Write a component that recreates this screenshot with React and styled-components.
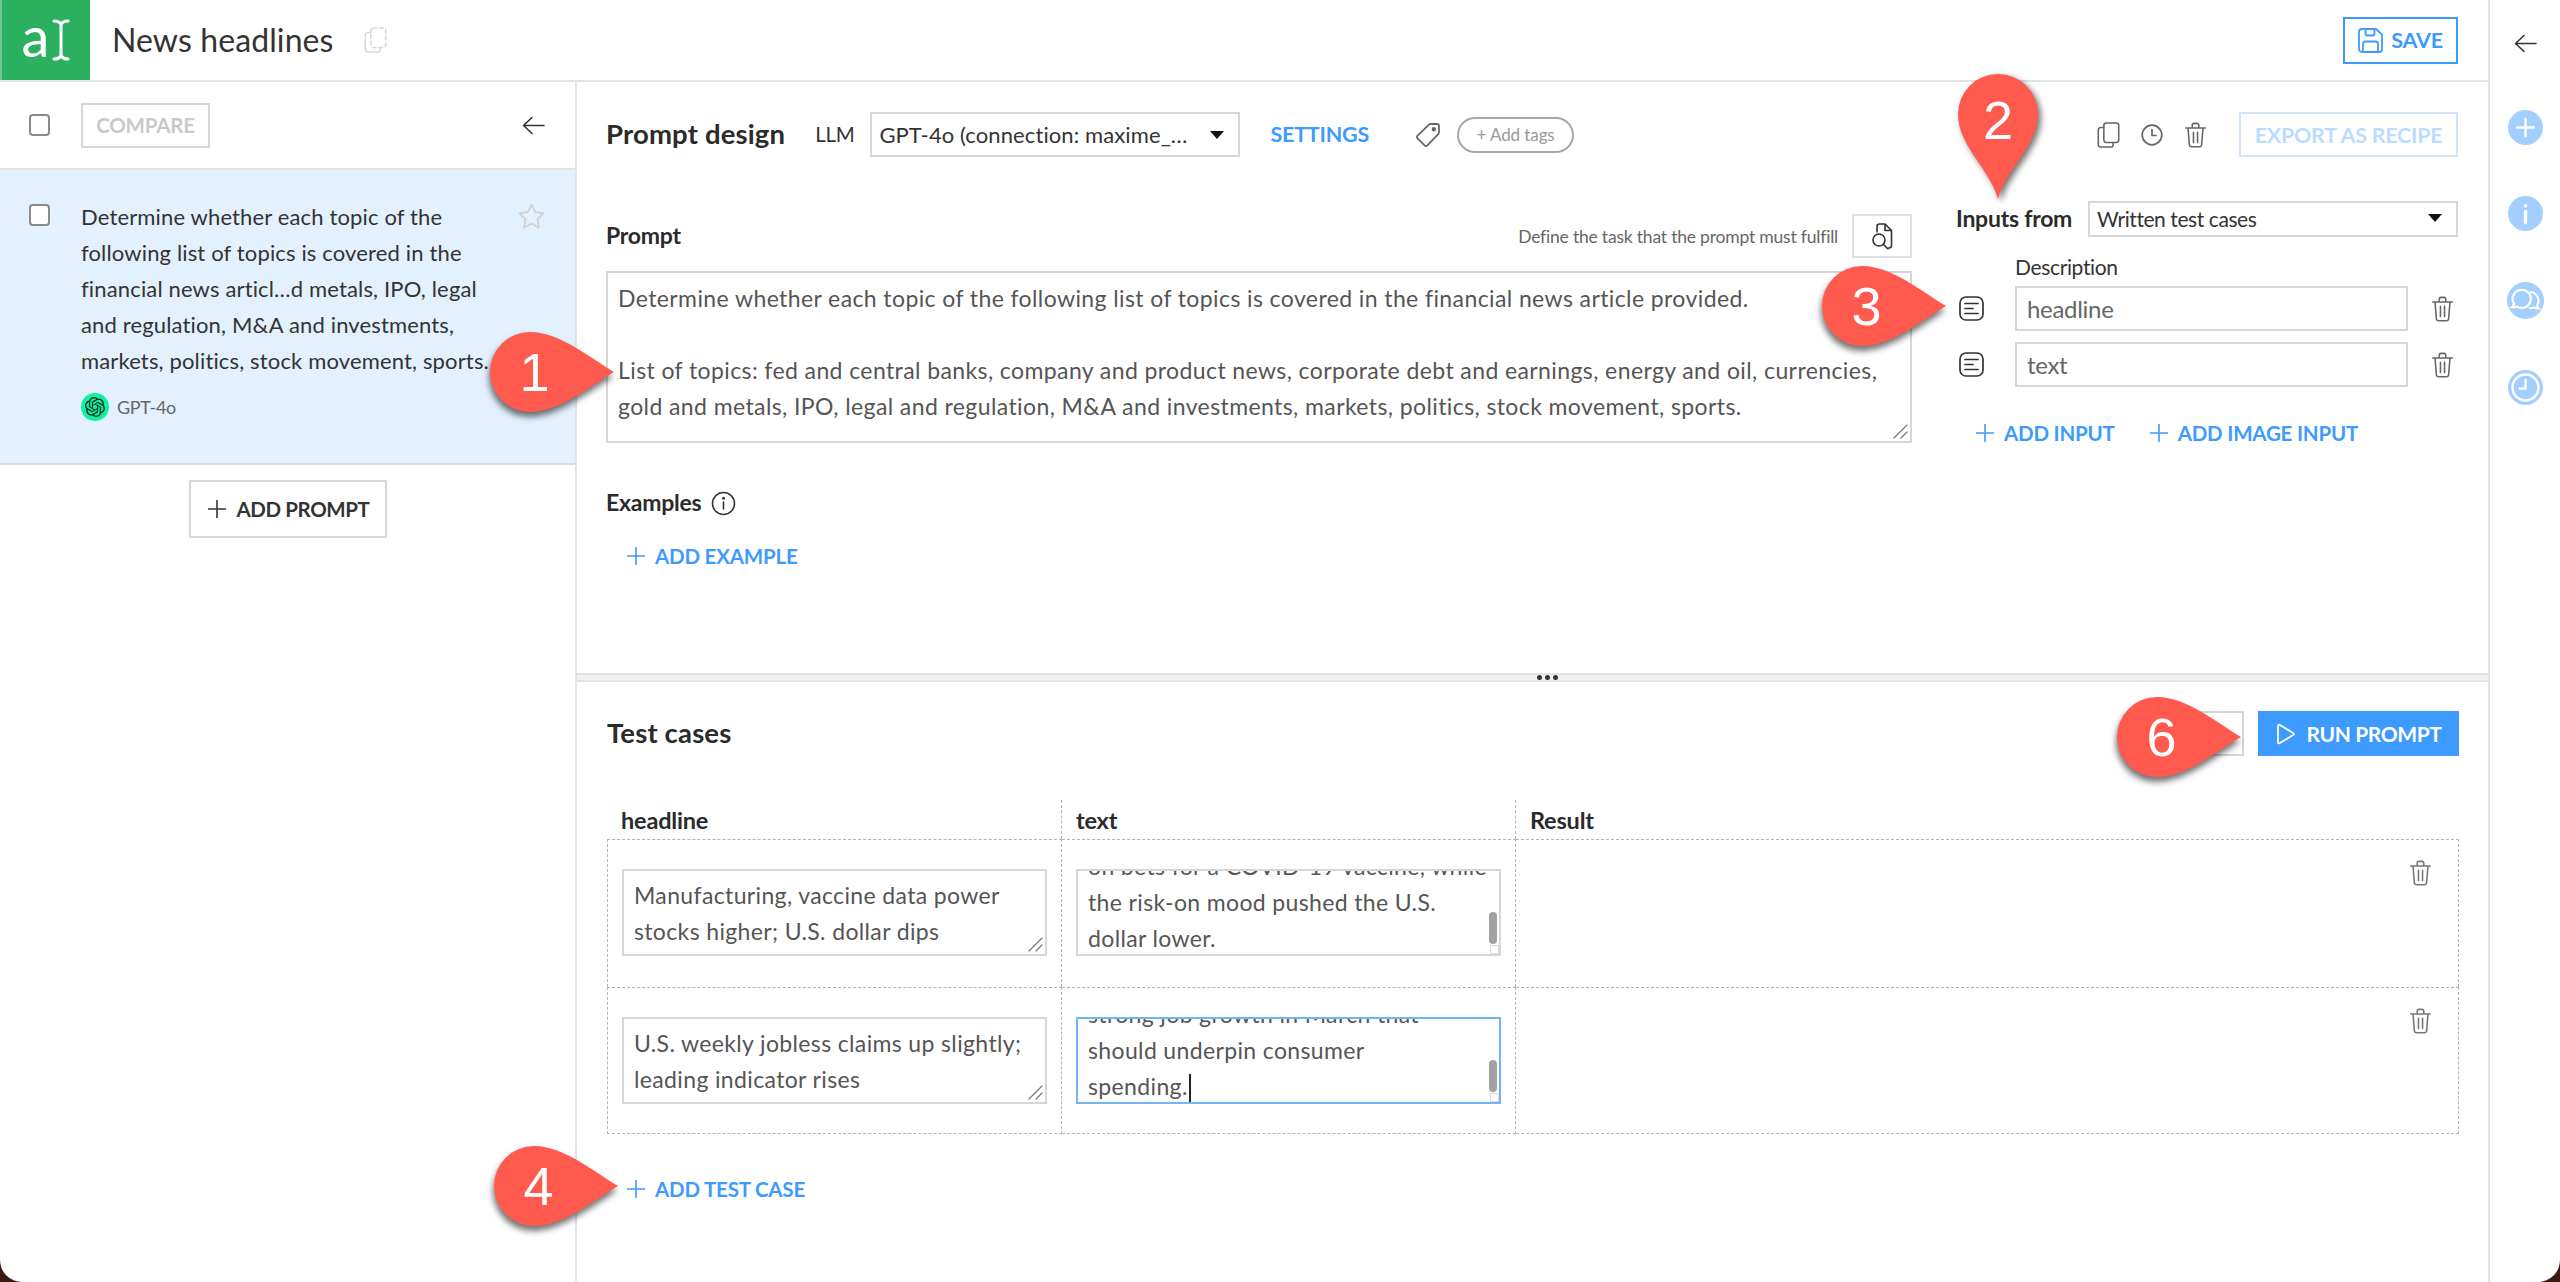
import React from "react";
import styled, { createGlobalStyle } from "styled-components";
import { SiOpenai } from "react-icons/si";

const Global = createGlobalStyle`
  html, body { margin: 0; padding: 0; background: #3a1a10; }
  * { box-sizing: border-box; }
  body { font-family: Lato, "Liberation Sans", sans-serif; color: #333; overflow: hidden; }
`;

const BLUE = "#3d9bff";
const LINE = "#d6d6d6";

const Window = styled.div`
  position: relative; width: 2560px; height: 1282px; background: #fff;
  border-radius: 0 0 22px 22px; overflow: hidden; display: flex;
`;
const Main = styled.div`flex: 1; min-width: 0; display: flex; flex-direction: column;`;
const TopBar = styled.header`
  height: 82px; flex: none; display: flex; align-items: center; border-bottom: 2px solid #e2e2e2; padding-right: 30px;
`;
const Logo = styled.div`
  width: 90px; height: 80px; background: #2bb05f; border-left: 2px solid #6cc893;
  display: flex; align-items: center; justify-content: center; gap: 3px; color: #fff;
  font-size: 56px; font-weight: 400; line-height: 1;
`;
const LogoLetter = styled.span`margin-bottom: 9px;`;
const Title = styled.h1`
  margin: 0 0 0 22px; font-size: 32px; font-weight: 400; letter-spacing: 0.1px; color: #333; padding-bottom: 2px;
`;
const TitleIcon = styled.span`display: flex; margin-left: 30px;`;
const SaveButton = styled.button`
  margin-left: auto; width: 115px; height: 47px; background: #fff; border: 2px solid ${BLUE}; color: ${BLUE};
  font: 700 21.5px Lato, sans-serif; letter-spacing: -0.2px; display: flex; align-items: center; justify-content: center; gap: 8px; padding: 0;
`;
const Body = styled.div`flex: 1; min-height: 0; display: flex;`;

const Sidebar = styled.aside`width: 577px; flex: none; border-right: 2px solid #e2e2e2; display: flex; flex-direction: column; align-items: stretch;`;
const SideHead = styled.div`
  height: 88px; flex: none; display: flex; align-items: center; padding: 0 30px 0 29px; border-bottom: 2px solid #e2e2e2;
`;
const Check = styled.span`
  display: block; flex: none; width: 21px; height: 22px; background: #fff; border: 2px solid #8a8a8a; border-radius: 4px;
`;
const CompareButton = styled.button`
  margin-left: 31px; width: 129px; height: 45px; background: #fff; border: 2px solid ${LINE}; color: #c9c9c9; padding: 0;
  font: 700 20.5px Lato, sans-serif; letter-spacing: -0.2px;
`;
const BackSlot = styled.span`margin-left: auto; display: flex;`;
const PromptCard = styled.div`
  height: 295px; flex: none; background: #e3f0fe; border-bottom: 2px solid #dcdcdc; padding: 29px 30px 0 29px;
  display: grid; grid-template-columns: 52px 1fr auto; align-items: start; position: relative;
`;
const CheckCell = styled.div`padding-top: 5px;`;
const CardBody = styled.div`min-width: 0;`;
const CardText = styled.div`font-size: 22px; line-height: 36px; letter-spacing: 0.15px; color: #333; white-space: nowrap;`;
const ModelRow = styled.div`display: flex; align-items: center; gap: 8px; margin-top: 14px; font-size: 18px; color: #666; letter-spacing: -0.3px;`;
const ModelBadge = styled.span`
  width: 28px; height: 28px; border-radius: 50%; background: #0ff0a0; display: flex; align-items: center; justify-content: center; color: #07251b;
`;
const StarCell = styled.div`padding-top: 4px;`;
const AddPromptRow = styled.div`display: flex; justify-content: center; padding-top: 15px;`;
const AddPromptButton = styled.button`
  width: 198px; height: 58px; background: #fff; border: 2px solid ${LINE}; color: #333; padding: 0 0 0 2px;
  font: 700 20.5px Lato, sans-serif; letter-spacing: -0.4px; display: flex; align-items: center; justify-content: center; gap: 11px;
`;

const Content = styled.main`flex: 1; min-width: 0; display: flex; flex-direction: column;`;
const Design = styled.section`height: 591px; flex: none; padding: 30px 30px 0 29px; display: flex; flex-direction: column;`;
const DesignHead = styled.div`height: 45px; flex: none; display: flex; align-items: center;`;
const SectionTitle = styled.h2`margin: 0; font-size: 27.5px; font-weight: 700; letter-spacing: 0.15px; color: #2b2b2b; padding-bottom: 2px;`;
const LlmLabel = styled.span`margin: 0 16px 0 30px; font-size: 20.5px; letter-spacing: -0.3px; padding-bottom: 2px;`;
const Select = styled.div`
  height: ${p => p.$h}px; width: ${p => p.$w}px; flex: none; border: 2px solid ${LINE}; background: #fff; display: flex; align-items: center;
  padding: 0 14px ${p => p.$pb}px ${p => p.$pl}px; font-size: ${p => p.$fs}px; letter-spacing: ${p => p.$ls}px; color: #333; white-space: nowrap; overflow: hidden;
`;
const SelectValue = styled.span`flex: 1; min-width: 0;`;
const Caret = styled.i`
  flex: none; width: 0; height: 0; border-left: 7px solid transparent; border-right: 7px solid transparent; border-top: 8px solid #111;
`;
const LinkButton = styled.button`
  background: none; border: 0; padding: 0; color: ${BLUE}; font: 700 20.5px Lato, sans-serif; letter-spacing: -0.2px; display: flex; align-items: center; gap: 10px; white-space: nowrap;
`;
const SettingsLink = styled(LinkButton)`margin-left: 30px; font-size: 21.5px; padding-bottom: 2px;`;
const TagWrap = styled.span`display: flex; margin-left: 46px;`;
const TagPill = styled.span`
  margin-left: 16px; width: 117px; height: 36px; border: 2px solid #a8a8a8; border-radius: 18px; color: #999; font-size: 17px;
  display: flex; align-items: center; justify-content: center; letter-spacing: -0.1px;
`;
const HeadActions = styled.div`margin-left: auto; display: flex; align-items: center;`;
const ActionIcons = styled.div`display: flex; align-items: center; gap: 21px; margin-right: 32px;`;
const ExportButton = styled.button`
  width: 219px; height: 45px; background: #fff; border: 2px solid #cfe5ff; color: #bcdcff; padding: 0;
  font: 700 21.5px Lato, sans-serif; letter-spacing: -0.25px;
`;
const DesignColumns = styled.div`display: grid; grid-template-columns: 1306px 502px; column-gap: 44px; margin-top: 44px;`;
const PromptCol = styled.div`padding-top: 13px;`;
const PromptHead = styled.div`height: 44px; display: flex; align-items: center;`;
const FieldLabel = styled.div`font-size: 23px; font-weight: 700; letter-spacing: -0.25px; color: #2b2b2b; padding-bottom: 2px;`;
const Helper = styled.span`margin-left: auto; font-size: 17.5px; color: #666; letter-spacing: -0.2px;`;
const FindButton = styled.button`
  margin-left: 14px; width: 60px; height: 44px; background: #fff; border: 2px solid #e0e0e0; padding: 0; display: flex; align-items: center; justify-content: center;
`;
const PromptBox = styled.div`
  position: relative; margin-top: 13px; height: 172px; border: 2px solid ${LINE}; padding: 7px 10px; font-size: 23px; line-height: 36px; color: #555; letter-spacing: 0.4px; white-space: nowrap;
`;
const Grip = styled.span`position: absolute; right: 2px; bottom: 2px; display: flex;`;
const ExamplesRow = styled.div`margin-top: 47px; display: flex; align-items: center; gap: 10px; height: 26px;`;
const IndentRow = styled.div`margin-top: 28px; padding-left: 21px;`;
const InputsCol = styled.div``;
const InputsFromRow = styled.div`display: flex; align-items: center; justify-content: space-between; height: 36px;`;
const Description = styled.div`margin: 17px 0 0 59px; height: 25px; line-height: 25px; font-size: 21px; letter-spacing: -0.35px; color: #333;`;
const InputRow = styled.div`
  display: grid; grid-template-columns: 59px 393px 50px; align-items: center; height: 45px; margin-top: ${p => p.$mt}px;
`;
const DocCell = styled.div`display: flex; padding-left: 3px;`;
const TextField = styled.div`
  height: 45px; border: 2px solid ${LINE}; padding: 0 10px; display: flex; align-items: center; font-size: 24px; letter-spacing: -0.3px; color: #666;
`;
const TrashCell = styled.div`display: flex; justify-content: flex-end; padding-right: 4px;`;
const AddRow = styled.div`display: flex; gap: 35px; margin: 34px 0 0 20px;`;

const Divider = styled.div`
  height: 9px; flex: none; background: #f0f0f0; border-top: 2px solid #e2e2e2; border-bottom: 2px solid #e2e2e2; display: flex; align-items: center; justify-content: center; gap: 3px; padding-left: 30px;
`;
const Dot = styled.i`width: 5px; height: 5px; border-radius: 50%; background: #333;`;
const Tests = styled.section`flex: 1; min-height: 0; padding: 29px 29px 0 30px;`;
const TestsHead = styled.div`display: flex; align-items: center; height: 45px;`;
const EmptyButton = styled.button`margin-left: auto; width: 80px; height: 45px; background: #fff; border: 2px solid ${LINE}; padding: 0;`;
const RunButton = styled.button`
  margin-left: 14px; width: 201px; height: 45px; background: ${BLUE}; border: 0; color: #fff; padding: 0;
  font: 700 21px Lato, sans-serif; letter-spacing: -0.4px; display: flex; align-items: center; justify-content: center; gap: 11px;
`;
const Table = styled.div`margin-top: 44px; display: grid; grid-template-columns: 455px 454px 1fr;`;
const HeadCell = styled.div`
  height: 39px; display: flex; align-items: center; padding-left: 14px; font-size: 23.5px; font-weight: 700; letter-spacing: -0.2px; color: #2b2b2b;
  ${p => (p.$divide ? "border-right: 1px dashed #b4b4b4;" : "")}
`;
const Cell = styled.div`
  height: ${p => p.$h}px; position: relative; padding: 29px 14px 0;
  border-top: 1px dashed #b4b4b4; border-right: 1px dashed #b4b4b4;
  ${p => (p.$first ? "border-left: 1px dashed #b4b4b4;" : "")}
  ${p => (p.$last ? "border-bottom: 1px dashed #b4b4b4;" : "")}
`;
const CaseBox = styled.div`
  position: relative; height: 87px; border: 2px solid ${p => (p.$focus ? "#71b5f5" : LINE)}; overflow: hidden;
  font-size: 23px; line-height: 36px; color: #555; letter-spacing: 0.36px; white-space: nowrap;
  padding: ${p => (p.$scrolled ? "0 10px" : "6px 10px 0")};
  display: flex; flex-direction: column; justify-content: ${p => (p.$scrolled ? "flex-end" : "flex-start")};
`;
const PlainText = styled.div``;
const ScrolledText = styled.div`margin-bottom: -2px;`;
const TextCaret = styled.i`display: inline-block; width: 2px; height: 28px; background: #222; vertical-align: -7px; margin-left: 1px;`;
const ScrollThumb = styled.i`position: absolute; right: 2px; bottom: 10px; width: 8px; height: 32px; border-radius: 4px; background: #a2a2a2;`;
const MiniGrip = styled.i`
  position: absolute; right: 0; bottom: 0; width: 9px; height: 9px; border: 1px solid #ddd; background: #fff;
`;
const RowTrash = styled.span`position: absolute; top: 20px; right: 26px; display: flex;`;
const AddCaseRow = styled.div`margin: 42px 0 0 20px; height: 26px; display: flex; align-items: center;`;

const Rail = styled.aside`
  width: 72px; flex: none; border-left: 2px solid #e2e2e2; display: flex; flex-direction: column; align-items: center; padding-top: 34px;
`;
const RailIcons = styled.div`display: flex; flex-direction: column; align-items: center; gap: 51px; margin-top: 57px;`;

const MarkerWrap = styled.div`
  position: absolute; left: ${p => p.$x}px; top: ${p => p.$y}px; width: ${p => p.$w}px; height: ${p => p.$h}px;
  filter: drop-shadow(${p => p.$shadow});
`;
const MarkerNum = styled.span`
  position: absolute; left: 0; top: ${p => (p.$down ? 6 : 0)}px; width: ${p => (p.$down ? 80 : 89)}px; height: 80px; display: flex; align-items: center; justify-content: center;
  color: #fff; font: 400 54px "Liberation Sans", Arial, sans-serif;
`;

const Svg = ({ w, h, vb, stroke = "#666", sw = 1.7, fill = "none", children }) => (
  <svg width={w} height={h} viewBox={vb} fill={fill} stroke={stroke} strokeWidth={sw} strokeLinecap="round" strokeLinejoin="round">
    {children}
  </svg>
);
const Trash = ({ w = 23, h = 26, color = "#666" }) => (
  <Svg w={w} h={h} vb="0 0 24 28" stroke={color}>
    <path d="M1.5 6.5h21M8.5 6V3.5a2 2 0 0 1 2-2h3a2 2 0 0 1 2 2V6M4 7l1.4 17.5a2.5 2.5 0 0 0 2.5 2.2h8.2a2.5 2.5 0 0 0 2.5-2.2L20 7M9.8 11v11M14.2 11v11" />
  </Svg>
);
const Arrow = ({ color = "#333" }) => (
  <Svg w={23} h={19} vb="0 0 23 19" stroke={color} sw={1.6}>
    <path d="M22 9.5H1.5M10 1.5l-8.5 8 8.5 8" />
  </Svg>
);
const Plus = ({ size = 18 }) => (
  <Svg w={size} h={size} vb="0 0 18 18" stroke="currentColor" sw={1.6}><path d="M9 0.5v17M0.5 9h17" /></Svg>
);
const DocLines = () => (
  <Svg w={25} h={25} vb="0 0 25 25" stroke="#333" sw={1.7}>
    <rect x="1" y="1" width="23" height="23" rx="6" /><path d="M6 7.5h13M6 12.5h8M6 17.5h13" />
  </Svg>
);
const CopyIcon = ({ color = "#666", dashed }) => (
  <Svg w={23} h={26} vb="0 0 24 28" stroke={color} sw={1.7}>
    <rect x="7" y="1" width="16" height="21" rx="2.5" strokeDasharray={dashed ? "4 3" : undefined} />
    <path d="M7 6H3.5A2.5 2.5 0 0 0 1 8.5v16A2.5 2.5 0 0 0 3.5 27h11a2.5 2.5 0 0 0 2.5-2.5V22" />
  </Svg>
);
const ClockIcon = () => (
  <Svg w={22} h={22} vb="0 0 22 22" stroke="#666" sw={1.7}>
    <circle cx="11" cy="11" r="9.8" /><path d="M11 5.5v6h4" />
  </Svg>
);
const SaveIcon = () => (
  <Svg w={25} h={25} vb="0 0 25 25" stroke={BLUE} sw={1.8}>
    <path d="M4 1h14l6 5.5V21a3 3 0 0 1-3 3H4a3 3 0 0 1-3-3V4a3 3 0 0 1 3-3zM7.5 1v4.5a2 2 0 0 0 2 2h5a2 2 0 0 0 2-2V1M5 24v-8a2.5 2.5 0 0 1 2.5-2.5h10A2.5 2.5 0 0 1 20 16v8" />
  </Svg>
);
const TagIcon = () => (
  <Svg w={26} h={26} vb="0 0 26 26" stroke="#666" sw={1.8}>
    <path d="M15.5 2H22a2 2 0 0 1 2 2v6.5a2 2 0 0 1-.6 1.4L12.4 23.4a2 2 0 0 1-2.8 0l-7-7a2 2 0 0 1 0-2.8L14 2.6a2 2 0 0 1 1.5-.6z" />
    <circle cx="18.8" cy="7.2" r="1.3" fill="#666" />
  </Svg>
);
const FindIcon = () => (
  <Svg w={22} h={27} vb="0 0 22 27" stroke="#333" sw={1.6}>
    <path d="M6 9V3.5A2.5 2.5 0 0 1 8.5 1H14l6.5 6.5v15a2.5 2.5 0 0 1-2.5 2.5h-.5M14 1v6.5h6.5" />
    <circle cx="8" cy="17" r="6" /><path d="M12.3 21.3l4.7 4.7" />
  </Svg>
);
const InfoIcon = () => (
  <Svg w={25} h={25} vb="0 0 25 25" stroke="#333" sw={1.6}>
    <circle cx="12.5" cy="12.5" r="11" /><path d="M12.5 11v7" /><circle cx="12.5" cy="7.3" r="0.7" fill="#333" />
  </Svg>
);
const PlayIcon = () => (
  <Svg w={20} h={22} vb="0 0 20 22" stroke="#fff" sw={1.8}><path d="M2 2.5v17a1 1 0 0 0 1.5.8l14-8.5a1 1 0 0 0 0-1.6l-14-8.5A1 1 0 0 0 2 2.5z" /></Svg>
);
const Star = () => (
  <Svg w={27} h={26} vb="0 0 27 26" stroke="#cfcfcf" sw={1.7}>
    <path d="M13.5 1.5l3.7 7.6 8.3 1.2-6 5.9 1.4 8.3-7.4-3.9-7.4 3.9 1.4-8.3-6-5.9 8.3-1.2z" />
  </Svg>
);
const ResizeGrip = () => (
  <Svg w={16} h={16} vb="0 0 16 16" stroke="#777" sw={1.2}><path d="M15 2L2 15M15 9l-6 6" /></Svg>
);
const IBeam = () => (
  <Svg w={18} h={42} vb="0 0 18 42" stroke="#fff" sw={3}>
    <path d="M2 2c3 0 5.5 1 7 3 1.5-2 4-3 7-3M9 5v32M2 40c3 0 5.5-1 7-3 1.5 2 4 3 7 3" />
  </Svg>
);
const RailCircle = ({ children, size = 35 }) => (
  <svg width={size} height={size} viewBox="0 0 35 35" fill="none" stroke="#fff" strokeWidth="2.4" strokeLinecap="round">
    <circle cx="17.5" cy="17.5" r="17.5" fill="#a3cfff" stroke="none" />
    {children}
  </svg>
);
const Marker = ({ x, y, n, down }) => (
  <MarkerWrap $x={x} $y={y} $w={down ? 80 : 124} $h={down ? 125 : 80} $shadow={down ? "3px 3px 3px rgba(0,0,0,.55)" : "-1px 5px 3px rgba(0,0,0,.55)"}>
    {down ? (
      <svg width="80" height="125" viewBox="0 0 80 125"><path fill="#ff5a4d" d="M40 125C32 95 0 72 0 40A40 40 0 0 1 80 40C80 72 48 95 40 125Z" /></svg>
    ) : (
      <svg width="124" height="80" viewBox="0 0 124 80"><path fill="#ff5a4d" d="M124 40C100 54 70 80 40 80A40 40 0 0 1 40 0C70 0 100 26 124 40Z" /></svg>
    )}
    <MarkerNum $down={down}>{n}</MarkerNum>
  </MarkerWrap>
);

const CaseRow = ({ h, headline, text, focus, last }) => (
  <>
    <Cell $first $last={last} $h={h}>
      <CaseBox>
        <PlainText>{headline[0]}<br />{headline[1]}</PlainText>
        <Grip><ResizeGrip /></Grip>
      </CaseBox>
    </Cell>
    <Cell $last={last} $h={h}>
      <CaseBox $scrolled $focus={focus}>
        <ScrolledText>
          {text[0]}<br />{text[1]}<br />{text[2]}{focus && <TextCaret />}
        </ScrolledText>
        <ScrollThumb />
        <MiniGrip />
      </CaseBox>
    </Cell>
    <Cell $last={last} $h={h}>
      <RowTrash><Trash w={23} h={26} color="#777" /></RowTrash>
    </Cell>
  </>
);

export default function App() {
  return (
    <>
      <Global />
      <Window>
        <Main>
          <TopBar>
            <Logo><LogoLetter>a</LogoLetter><IBeam /></Logo>
            <Title>News headlines</Title>
            <TitleIcon><CopyIcon color="#d8d8d8" dashed /></TitleIcon>
            <SaveButton><SaveIcon />SAVE</SaveButton>
          </TopBar>
          <Body>
            <Sidebar>
              <SideHead>
                <Check />
                <CompareButton>COMPARE</CompareButton>
                <BackSlot><Arrow /></BackSlot>
              </SideHead>
              <PromptCard>
                <CheckCell><Check /></CheckCell>
                <CardBody>
                  <CardText>
                    Determine whether each topic of the<br />
                    following list of topics is covered in the<br />
                    financial news articl…d metals, IPO, legal<br />
                    and regulation, M&amp;A and investments,<br />
                    markets, politics, stock movement, sports.
                  </CardText>
                  <ModelRow><ModelBadge><SiOpenai size={20} /></ModelBadge>GPT-4o</ModelRow>
                </CardBody>
                <StarCell><Star /></StarCell>
              </PromptCard>
              <AddPromptRow>
                <AddPromptButton><Plus />ADD PROMPT</AddPromptButton>
              </AddPromptRow>
            </Sidebar>
            <Content>
              <Design>
                <DesignHead>
                  <SectionTitle>Prompt design</SectionTitle>
                  <LlmLabel>LLM</LlmLabel>
                  <Select $w={370} $h={45} $fs={22} $ls={0.1} $pl={7} $pb={0}>
                    <SelectValue>GPT-4o (connection: maxime_…</SelectValue><Caret />
                  </Select>
                  <SettingsLink>SETTINGS</SettingsLink>
                  <TagWrap><TagIcon /></TagWrap>
                  <TagPill>+ Add tags</TagPill>
                  <HeadActions>
                    <ActionIcons><CopyIcon /><ClockIcon /><Trash /></ActionIcons>
                    <ExportButton>EXPORT AS RECIPE</ExportButton>
                  </HeadActions>
                </DesignHead>
                <DesignColumns>
                  <PromptCol>
                    <PromptHead>
                      <FieldLabel>Prompt</FieldLabel>
                      <Helper>Define the task that the prompt must fulfill</Helper>
                      <FindButton><FindIcon /></FindButton>
                    </PromptHead>
                    <PromptBox>
                      Determine whether each topic of the following list of topics is covered in the financial news article provided.<br /><br />
                      List of topics: fed and central banks, company and product news, corporate debt and earnings, energy and oil, currencies,<br />
                      gold and metals, IPO, legal and regulation, M&amp;A and investments, markets, politics, stock movement, sports.
                      <Grip><ResizeGrip /></Grip>
                    </PromptBox>
                    <ExamplesRow><FieldLabel>Examples</FieldLabel><InfoIcon /></ExamplesRow>
                    <IndentRow><LinkButton><Plus />ADD EXAMPLE</LinkButton></IndentRow>
                  </PromptCol>
                  <InputsCol>
                    <InputsFromRow>
                      <FieldLabel>Inputs from</FieldLabel>
                      <Select $w={370} $h={36} $fs={21} $ls={-0.42} $pl={7} $pb={2}>
                        <SelectValue>Written test cases</SelectValue><Caret />
                      </Select>
                    </InputsFromRow>
                    <Description>Description</Description>
                    <InputRow $mt={7}>
                      <DocCell><DocLines /></DocCell><TextField>headline</TextField><TrashCell><Trash /></TrashCell>
                    </InputRow>
                    <InputRow $mt={11}>
                      <DocCell><DocLines /></DocCell><TextField>text</TextField><TrashCell><Trash /></TrashCell>
                    </InputRow>
                    <AddRow>
                      <LinkButton><Plus />ADD INPUT</LinkButton>
                      <LinkButton><Plus />ADD IMAGE INPUT</LinkButton>
                    </AddRow>
                  </InputsCol>
                </DesignColumns>
              </Design>
              <Divider><Dot /><Dot /><Dot /></Divider>
              <Tests>
                <TestsHead>
                  <SectionTitle>Test cases</SectionTitle>
                  <EmptyButton aria-label="options" />
                  <RunButton><PlayIcon />RUN PROMPT</RunButton>
                </TestsHead>
                <Table>
                  <HeadCell $divide>headline</HeadCell>
                  <HeadCell $divide>text</HeadCell>
                  <HeadCell>Result</HeadCell>
                  <CaseRow
                    h={148}
                    headline={["Manufacturing, vaccine data power", "stocks higher; U.S. dollar dips"]}
                    text={["on bets for a COVID-19 vaccine, while", "the risk-on mood pushed the U.S.", "dollar lower."]}
                  />
                  <CaseRow
                    h={147}
                    last
                    focus
                    headline={["U.S. weekly jobless claims up slightly;", "leading indicator rises"]}
                    text={["strong job growth in March that", "should underpin consumer", "spending."]}
                  />
                </Table>
                <AddCaseRow><LinkButton><Plus />ADD TEST CASE</LinkButton></AddCaseRow>
              </Tests>
            </Content>
          </Body>
        </Main>
        <Rail>
          <Arrow />
          <RailIcons>
            <RailCircle><path d="M17.5 9v17M9 17.5h17" /></RailCircle>
            <RailCircle><path d="M17.5 15.5v11M17.5 9.5v.5" strokeWidth="3.4" /></RailCircle>
            <RailCircle size={37}>
              <path strokeWidth="2" d="M14 7.5a8.5 8.5 0 1 1-4.5 15.7c-1.2.6-3 .9-5 .7 1-.8 1.8-2 2.2-3.2A8.5 8.5 0 0 1 14 7.5z" />
              <path strokeWidth="2" d="M22.5 9.5a8.5 8.5 0 0 1 6 13c.2 1 .8 1.8 1.6 2.5-1.5.2-3.2-.2-4.4-.9-1.2.5-2.6.7-4.2.5" />
            </RailCircle>
            <RailCircle><circle cx="17.5" cy="17.5" r="13" /><path d="M17.5 10v8.5h-6" /></RailCircle>
          </RailIcons>
        </Rail>
        <Marker x={490} y={332} n="1" />
        <Marker x={1958} y={74} n="2" down />
        <Marker x={1822} y={266} n="3" />
        <Marker x={494} y={1146} n="4" />
        <Marker x={2117} y={697} n="6" />
      </Window>
    </>
  );
}
